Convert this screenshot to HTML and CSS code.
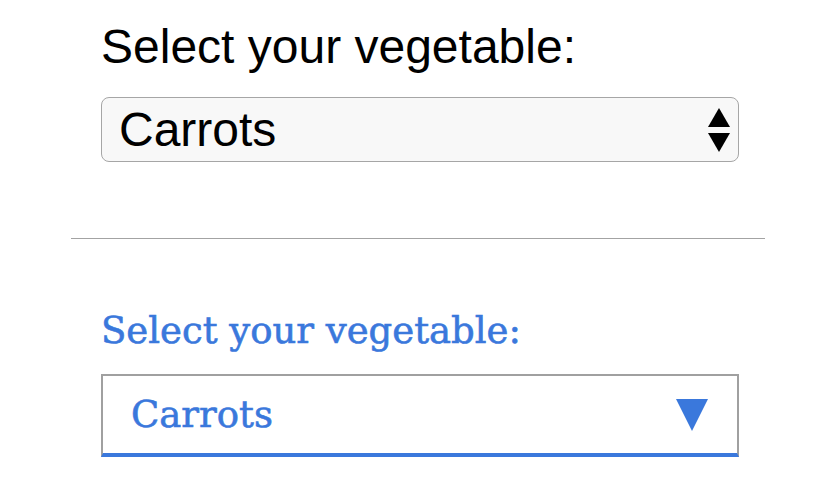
FILE: index.html
```html
<!DOCTYPE html>
<html lang="en">
<head>
<meta charset="utf-8">
<title>Select your vegetable</title>
<link rel="stylesheet" href="styles.css">
</head>
<body>
<main class="page">
  <section class="field native">
    <label class="label">Select your vegetable:</label>
    <div class="select">
      <span class="value">Carrots</span>
      <svg class="updown" width="22" height="44" viewBox="0 0 22 44" aria-hidden="true">
        <polygon points="11,0 22,19 0,19" fill="#000"/>
        <polygon points="0,25 22,25 11,44" fill="#000"/>
      </svg>
    </div>
  </section>
  <hr class="divider">
  <section class="field styled">
    <label class="label">Select your vegetable:</label>
    <div class="select">
      <span class="value">Carrots</span>
      <svg class="caret" width="32" height="32" viewBox="0 0 32 32" aria-hidden="true">
        <polygon points="0,0 32,0 16,32" fill="#3a78dc"/>
      </svg>
    </div>
  </section>
</main>
</body>
</html>
```

FILE: styles.css
```css
html, body {
  margin: 0;
  padding: 0;
  background: #ffffff;
}

.page {
  width: 840px;
  height: 494px;
  overflow: hidden;
}

.field {
  padding-left: 101px;
  width: 638px;
}

.label {
  display: block;
}

.select {
  display: flex;
  align-items: center;
  justify-content: space-between;
  box-sizing: border-box;
}

/* native-looking select */
.native {
  padding-top: 19px;
  font-family: "Liberation Sans", Arial, sans-serif;
  color: #000;
}

.native .label {
  font-size: 48px;
  line-height: 56px;
  margin-bottom: 22px;
}

.native .select {
  height: 65px;
  border: 1px solid #a6a6a6;
  border-radius: 8px;
  background: #f8f8f8;
  padding: 0 8px 0 17px;
  font-size: 48px;
  line-height: 63px;
}

.updown {
  display: block;
}

.divider {
  margin: 76px 0 0 71px;
  width: 694px;
  height: 0;
  border: 0;
  border-top: 1px solid #a3a3a3;
}

/* styled select */
.styled {
  padding-top: 70px;
  font-family: "DejaVu Serif", "Liberation Serif", serif;
  color: #3a78dc;
  -webkit-text-stroke: 0.6px #3a78dc;
}

.styled .label {
  font-size: 37px;
  line-height: 44px;
  margin-bottom: 21px;
}

.styled .select {
  height: 83px;
  border: 2px solid #a0a0a0;
  border-bottom: 4px solid #3a78dc;
  background: #fff;
  padding: 0 29px 0 28px;
  font-size: 37px;
}
```
